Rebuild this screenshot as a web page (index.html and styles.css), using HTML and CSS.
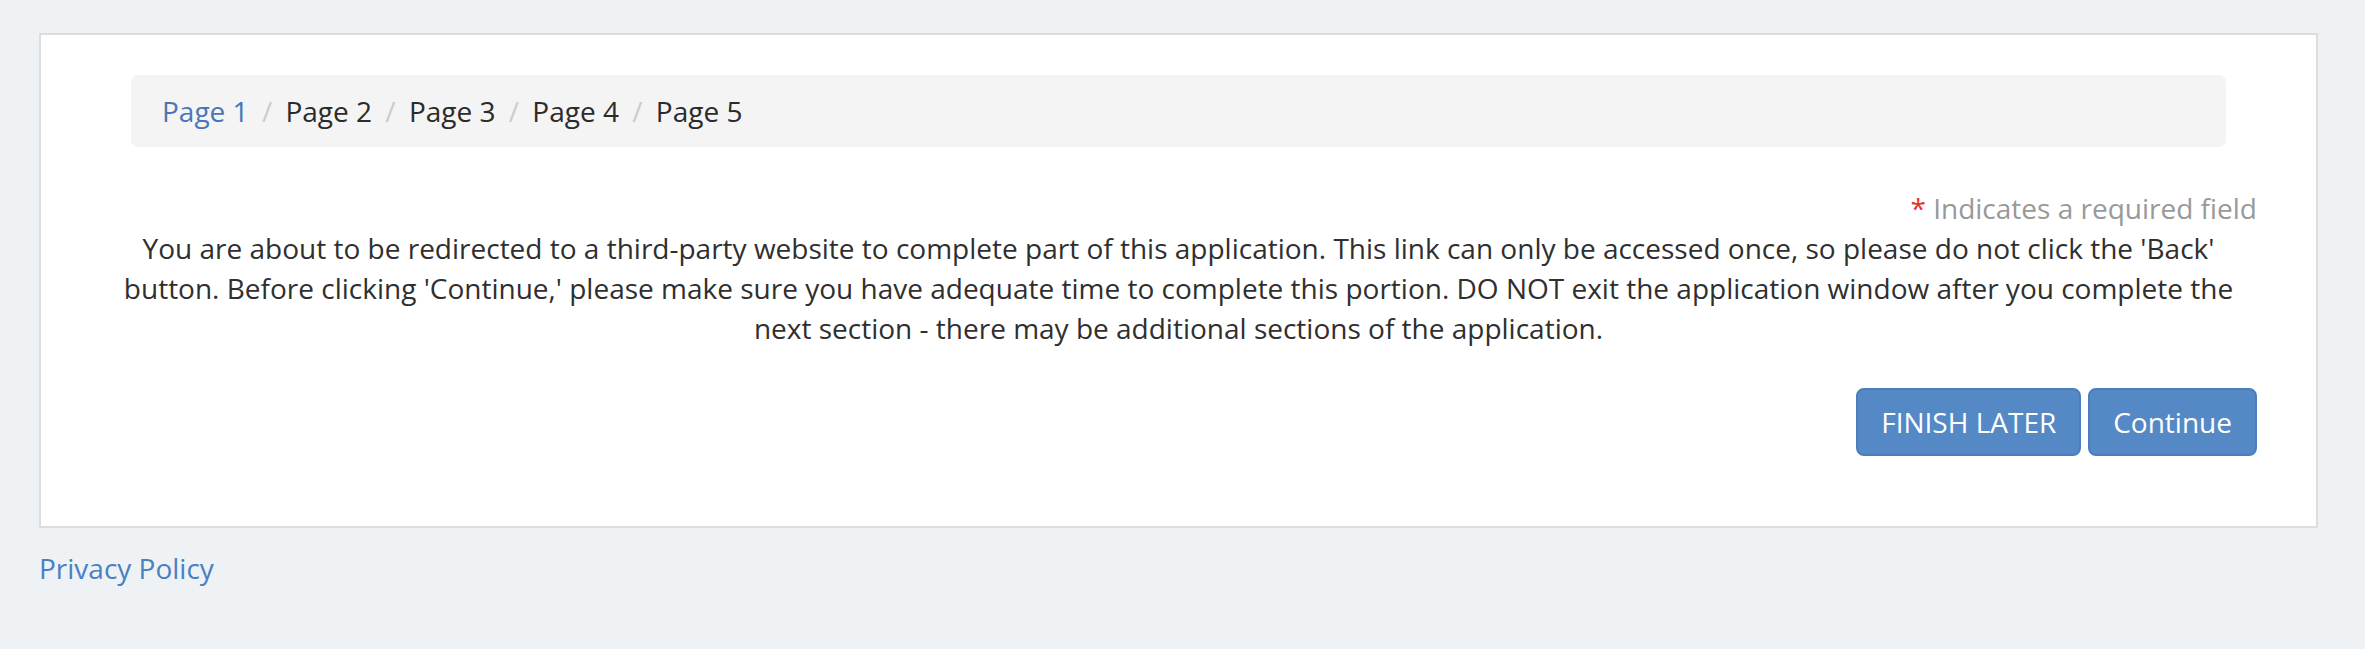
FILE: index.html
```html
<!DOCTYPE html>
<html lang="en">
<head>
<meta charset="utf-8">
<title>Application</title>
<link rel="stylesheet" href="styles.css">
</head>
<body>
<div class="page">
  <main class="card">
    <ol class="breadcrumb">
      <li class="crumb active"><a href="#">Page 1</a></li>
      <li class="crumb">Page 2</li>
      <li class="crumb">Page 3</li>
      <li class="crumb">Page 4</li>
      <li class="crumb">Page 5</li>
    </ol>
    <div class="required-note"><span class="star">*</span> Indicates a required field</div>
    <p class="message">You are about to be redirected to a third-party website to complete part of this application. This link can only be accessed once, so please do not click the 'Back' button. Before clicking 'Continue,' please make sure you have adequate time to complete this portion. DO NOT exit the application window after you complete the next section - there may be additional sections of the application.</p>
    <div class="actions">
      <button class="btn" type="button">FINISH LATER</button>
      <button class="btn" type="button">Continue</button>
    </div>
  </main>
  <footer class="footer">
    <a class="footer-link" href="#">Privacy Policy</a>
  </footer>
</div>
</body>
</html>
```

FILE: styles.css
```css
html, body {
  margin: 0;
  padding: 0;
}

body {
  background: #eef2f5;
  font-family: "Open Sans", "Noto Sans", sans-serif;
  font-size: 28px;
  line-height: 40px;
  color: #2f2f2f;
}

.page {
  padding: 33px 47px 40px 39px;
}

.card {
  display: block;
  background: #ffffff;
  border: 2px solid #dcdddf;
  padding: 40px 59px 40px 59px;
}

.breadcrumb {
  list-style: none;
  margin: 0 31px;
  padding: 16px 31px;
  background: #f4f4f4;
  border-radius: 7px;
}

.crumb {
  display: inline;
  color: #2b2b2b;
}

.crumb + .crumb::before {
  content: "/\00a0";
  padding: 0 6px;
  color: #cccccc;
}

.crumb a {
  color: #4a76b6;
  text-decoration: none;
}

.required-note {
  margin-top: 41px;
  text-align: right;
  color: #999999;
}

.star {
  color: #e8322d;
}

.message {
  margin: 0;
  text-align: center;
  color: #2f2f2f;
}

.actions {
  display: flex;
  justify-content: flex-end;
  gap: 7px;
  margin-top: 40px;
  margin-bottom: 30px;
}

.btn {
  font-family: "Open Sans", "Noto Sans", sans-serif;
  font-size: 28px;
  line-height: 40px;
  color: #ffffff;
  background: #5589c6;
  border: 2px solid #4b7dbb;
  border-radius: 8px;
  padding: 12px 23px;
  margin: 0;
  cursor: pointer;
}

.footer {
  margin-top: 20px;
}

.footer-link {
  color: #4a80c2;
  text-decoration: none;
}
```
